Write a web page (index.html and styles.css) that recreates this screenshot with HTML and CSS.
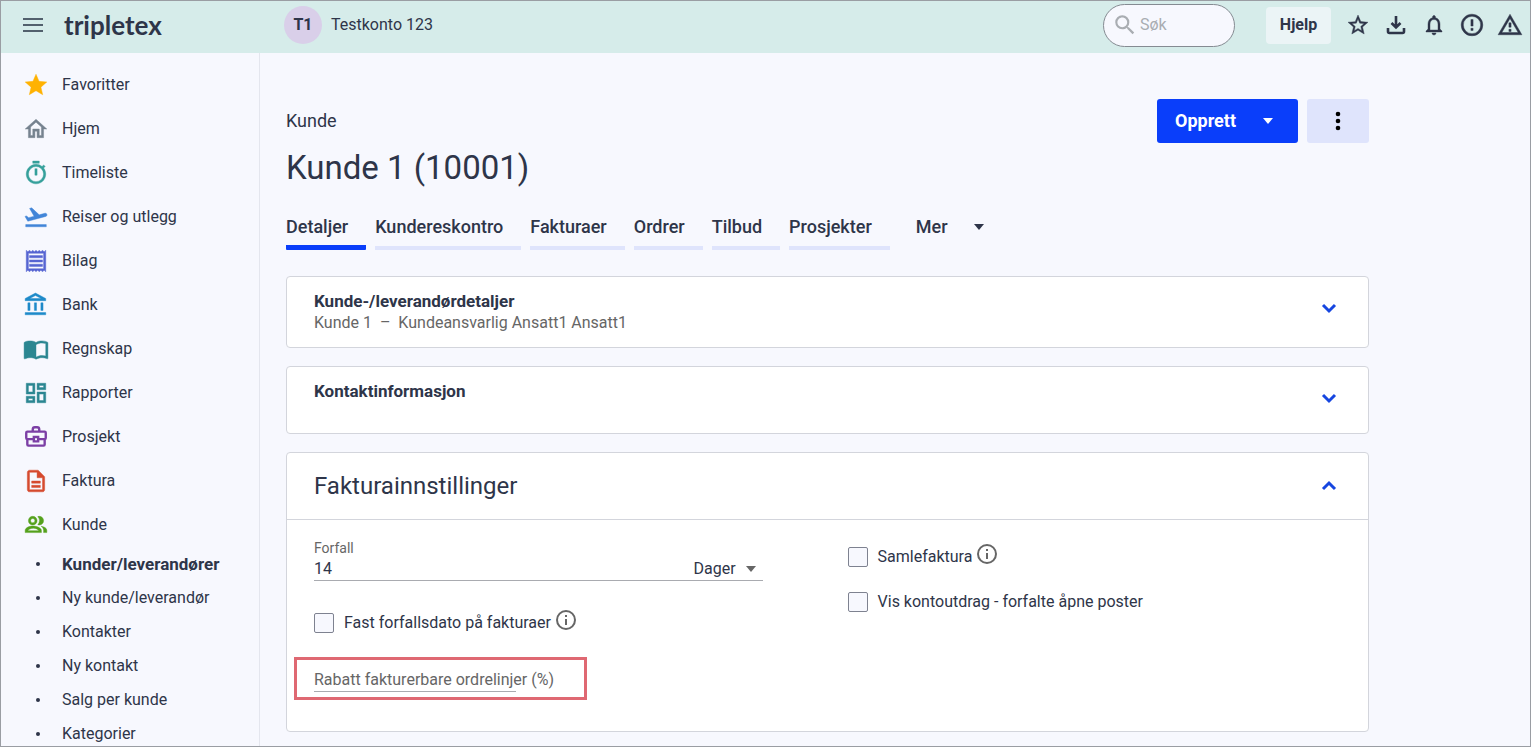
FILE: index.html
```html
<!DOCTYPE html>
<html lang="no">
<head>
	<title>Kunde 1 (10001) - Tripletex</title>
	<meta name="viewport" content="width=device-width, initial-scale=1.0">
	<meta charset="utf-8">

	<link rel="stylesheet" href="styles.css">
</head>
<body>

	<header class="topbar">
		<div class="topbar-brand">
			<button type="button" class="menu-button" aria-label="Meny">
				<svg width="22" height="16" viewBox="0 0 22 16"><path d="M1 2h20M1 8h20M1 14h20" stroke="currentColor" stroke-width="2"/></svg>
			</button>
			<a href="#" class="logo">tripletex</a>
		</div>

		<button type="button" class="account">
			<span class="avatar">T1</span>
			<span>Testkonto 123</span>
		</button>

		<label class="search">
			<svg width="26" height="26" viewBox="0 0 24 24" fill="currentColor"><path d="M15.5 14h-.79l-.28-.27A6.47 6.47 0 0 0 16 9.5 6.5 6.5 0 1 0 9.500 16c1.610 0 3.090-.59 4.230-1.570l.27.28v.79l5 4.990L20.490 19zm-6 0C7.010 14 5 11.990 5 9.500S7.010 5 9.500 5 14 7.010 14 9.500 11.990 14 9.500 14"/></svg>
			<input type="search" placeholder="Søk" aria-label="Søk">
		</label>

		<button type="button" class="help-button">Hjelp</button>

		<div class="topbar-icons">
			<button type="button" aria-label="Favoritter">
				<svg width="24" height="24" viewBox="0 0 24 24" fill="currentColor"><path d="m22 9.240-7.190-.62L12 2 9.190 8.630 2 9.240l5.460 4.730L5.820 21 12 17.270 18.180 21l-1.630-7.030zM12 15.400l-3.760 2.270 1-4.280-3.320-2.880 4.380-.38L12 6.100l1.710 4.040 4.380.38-3.320 2.880 1 4.280z"/></svg>
			</button>
			<button type="button" aria-label="Last ned">
				<svg width="24" height="24" viewBox="0 0 24 24"><path d="M12 3v11M7.500 10l4.500 4.500 4.500-4.500M4 15v3.500q0 1.500 1.500 1.500h13q1.500 0 1.500-1.500V15" fill="none" stroke="currentColor" stroke-width="2.600"/></svg>
			</button>
			<button type="button" aria-label="Varsler">
				<svg width="24" height="24" viewBox="0 0 24 24" fill="currentColor"><path d="M12 22c1.100 0 2-.9 2-2h-4c0 1.100.9 2 2 2m6-6v-5c0-3.070-1.630-5.640-4.500-6.320V4c0-.83-.67-1.500-1.500-1.500s-1.500.67-1.500 1.500v.68C7.640 5.360 6 7.920 6 11v5l-2 2v1h16v-1zm-2 1H8v-6c0-2.480 1.510-4.500 4-4.500s4 2.020 4 4.500z"/></svg>
			</button>
			<button type="button" aria-label="Feil">
				<svg width="26" height="26" viewBox="0 0 24 24" fill="currentColor"><path d="M11 15h2v2h-2zm0-8h2v6h-2zm1-5C6.470 2 2 6.500 2 12a10 10 0 1 0 10-10m0 18a8 8 0 1 1 0-16 8 8 0 0 1 0 16"/></svg>
			</button>
			<button type="button" aria-label="Advarsler">
				<svg width="26" height="26" viewBox="0 0 24 24" fill="currentColor"><path d="M12 5.990 19.530 19H4.470zM12 2 1 21h22zm1 14h-2v2h2zm0-6h-2v4h2z"/></svg>
			</button>
		</div>
	</header>

	<div class="layout">
		<nav class="sidebar">
			<ul class="menu">
				<li><a href="#" class="menu-item">
					<svg class="star" viewBox="0 0 24 24"><path d="M12 17.270 18.180 21l-1.640-7.030L22 9.240l-7.190-.61L12 2 9.190 8.630 2 9.240l5.460 4.730L5.820 21z"/></svg>
					Favoritter
				</a></li>
				<li><a href="#" class="menu-item">
					<svg class="home" viewBox="0 0 24 24"><path d="m12 5.690 5 4.500V18h-2v-6H9v6H7v-7.810zM12 3 2 12h3v8h6v-6h2v6h6v-8h3z"/></svg>
					Hjem
				</a></li>
				<li><a href="#" class="menu-item">
					<svg class="timer" viewBox="0 0 24 24"><path d="M15 1H9v2h6zm-4 13h2V8h-2zm8.030-6.610 1.420-1.420c-.43-.51-.9-.99-1.410-1.410l-1.420 1.420A8.960 8.960 0 0 0 12 4a9 9 0 1 0 7.030 3.390M12 20a7 7 0 1 1 0-14 7 7 0 0 1 0 14"/></svg>
					Timeliste
				</a></li>
				<li><a href="#" class="menu-item">
					<svg class="travel" viewBox="0 0 24 24"><path d="M2.500 19h19v2h-19zm19.570-9.360c-.21-.8-1.040-1.280-1.840-1.060L14.920 10l-6.900-6.430-1.930.51 4.140 7.170-4.970 1.330-1.970-1.540-1.450.39 2.590 4.490 16.570-4.440c.81-.23 1.280-1.050 1.070-1.840"/></svg>
					Reiser og utlegg
				</a></li>
				<li><a href="#" class="menu-item">
					<svg class="voucher" viewBox="0 0 24 24"><path d="M19.500 3.500 18 2l-1.500 1.500L15 2l-1.500 1.500L12 2l-1.500 1.500L9 2 7.500 3.500 6 2 4.500 3.500 3 2v20l1.500-1.500L6 22l1.500-1.500L9 22l1.500-1.500L12 22l1.500-1.500L15 22l1.500-1.500L18 22l1.500-1.500L21 22V2zM19 19.090H5V4.910h14zM6 15h12v2H6zm0-4h12v2H6zm0-4h12v2H6z"/></svg>
					Bilag
				</a></li>
				<li><a href="#" class="menu-item">
					<svg class="bank" viewBox="0 0 24 24"><path d="M6.500 10h-2v7h2zm6 0h-2v7h2zm8.500 9H2v2h19zm-2.500-9h-2v7h2zm-7-6.740L16.710 6H6.290zm0-2.260L2 6v2h19V6z"/></svg>
					Bank
				</a></li>
				<li><a href="#" class="menu-item">
					<svg class="ledger" viewBox="0 0 24 24"><path d="M21 5c-1.110-.35-2.330-.5-3.500-.5-1.950 0-4.050.4-5.500 1.500-1.450-1.100-3.550-1.500-5.500-1.500S2.450 4.900 1 6v14.650c0 .25.250.5.5.5.1 0 .15-.05.25-.05C3.100 20.450 5.050 20 6.500 20c1.950 0 4.050.4 5.500 1.500 1.350-.85 3.800-1.500 5.500-1.500 1.650 0 3.350.3 4.750 1.050.1.050.15.050.25.050.25 0 .5-.25.5-.5V6c-.6-.45-1.250-.75-2-1m0 13.500c-1.100-.35-2.300-.5-3.500-.5-1.700 0-4.150.65-5.500 1.500V8c1.350-.85 3.800-1.500 5.500-1.500 1.200 0 2.400.15 3.500.5z"/></svg>
					Regnskap
				</a></li>
				<li><a href="#" class="menu-item">
					<svg class="reports" viewBox="0 0 24 24"><path d="M19 5v2h-4V5zM9 5v6H5V5zm10 8v6h-4v-6zM9 17v2H5v-2zM21 3h-8v6h8zM11 3H3v10h8zm10 8h-8v10h8zm-10 4H3v6h8z"/></svg>
					Rapporter
				</a></li>
				<li><a href="#" class="menu-item">
					<svg class="project" viewBox="0 0 24 24"><path d="M9 7V5q0-2 2-2h2q2 0 2 2v2M9 14H4q-1 0-1-1V8q0-1 1-1h16q1 0 1 1v5q0 1-1 1h-5M4 14v5q0 1 1 1h14q1 0 1-1v-5M10 12h4v4h-4z"/></svg>
					Prosjekt
				</a></li>
				<li><a href="#" class="menu-item">
					<svg class="invoice" viewBox="0 0 24 24"><path d="M8 16h8v2H8zm0-4h8v2H8zm6-10H6c-1.100 0-2 .9-2 2v16c0 1.100.89 2 1.990 2H18c1.100 0 2-.9 2-2V8zm4 18H6V4h7v5h5z"/></svg>
					Faktura
				</a></li>
				<li>
					<a href="#" class="menu-item">
						<svg class="customer" viewBox="0 0 24 24"><path d="M16.670 13.130C18.040 14.060 19 15.320 19 17v2h3v-2c0-2.180-2.570-3.470-5.330-3.870M15 12a4 4 0 1 0 0-8c-.47 0-.91.1-1.330.24a5.980 5.980 0 0 1 0 7.520c.42.14.86.24 1.330.24m-6 0a4 4 0 1 0 0-8 4 4 0 0 0 0 8m0-6a2 2 0 1 1 0 4 2 2 0 0 1 0-4m0 7c-2.670 0-7 1.340-7 4v2h15v-2c0-2.660-5.330-4-8-4m5 4.200H4.500C5.200 16 7 15 9.500 15s4.300 1 5 2.200z"/></svg>
						Kunde
					</a>
					<ul class="submenu">
						<li><a href="#" class="submenu-item current">Kunder/leverandører</a></li>
						<li><a href="#" class="submenu-item">Ny kunde/leverandør</a></li>
						<li><a href="#" class="submenu-item">Kontakter</a></li>
						<li><a href="#" class="submenu-item">Ny kontakt</a></li>
						<li><a href="#" class="submenu-item">Salg per kunde</a></li>
						<li><a href="#" class="submenu-item">Kategorier</a></li>
					</ul>
				</li>
			</ul>
		</nav>

		<main class="content">
			<div class="page-head">
				<div>
					<div class="breadcrumb">Kunde</div>
					<h1>Kunde 1 (10001)</h1>
				</div>
				<div class="page-actions">
					<button type="button" class="create-button">Opprett <span class="caret"></span></button>
					<button type="button" class="more-button" aria-label="Flere valg">
						<svg width="6" height="20" viewBox="0 0 6 20"><circle cx="3" cy="3" r="2.300"/><circle cx="3" cy="10" r="2.300"/><circle cx="3" cy="17" r="2.300"/></svg>
					</button>
				</div>
			</div>

			<nav class="tabs">
				<a href="#" class="tab active">Detaljer</a>
				<a href="#" class="tab">Kundereskontro</a>
				<a href="#" class="tab">Fakturaer</a>
				<a href="#" class="tab">Ordrer</a>
				<a href="#" class="tab">Tilbud</a>
				<a href="#" class="tab">Prosjekter</a>
				<button type="button" class="tab-more">Mer <span class="caret"></span></button>
			</nav>

			<section class="panel">
				<button type="button" class="panel-toggle">
					<span>
						<strong>Kunde-/leverandørdetaljer</strong>
						<span class="summary">Kunde 1&nbsp; –&nbsp; Kundeansvarlig Ansatt1 Ansatt1</span>
					</span>
					<svg class="chevron" viewBox="0 0 24 24"><path d="m6 9 6 6 6-6"/></svg>
				</button>
			</section>

			<section class="panel">
				<button type="button" class="panel-toggle">
					<strong>Kontaktinformasjon</strong>
					<svg class="chevron" viewBox="0 0 24 24"><path d="m6 9 6 6 6-6"/></svg>
				</button>
			</section>

			<section class="panel">
				<button type="button" class="panel-toggle open">
					<span class="panel-title">Fakturainnstillinger</span>
					<svg class="chevron" viewBox="0 0 24 24"><path d="m6 15 6-6 6 6"/></svg>
				</button>

				<div class="panel-body">
					<div class="column">
						<label for="due" class="field-label">Forfall</label>
						<div class="due-field">
							<input type="text" id="due" value="14">
							<select aria-label="Enhet">
								<option>Dager</option>
							</select>
							<span class="caret"></span>
						</div>

						<div class="check-row">
							<input type="checkbox" id="fixed-date">
							<label for="fixed-date">Fast forfallsdato på fakturaer</label>
							<svg class="info" viewBox="0 0 24 24"><path d="M11 7h2v2h-2zm0 4h2v6h-2zm1-9a10 10 0 1 0 0 20 10 10 0 0 0 0-20m0 18a8 8 0 1 1 0-16 8 8 0 0 1 0 16"/></svg>
						</div>

						<div class="discount-field">
							<label for="discount">Rabatt fakturerbare ordrelinjer (%)</label>
							<input type="text" id="discount">
							<span class="highlight"></span>
						</div>
					</div>

					<div class="column options">
						<div class="check-row">
							<input type="checkbox" id="collective">
							<label for="collective">Samlefaktura</label>
							<svg class="info" viewBox="0 0 24 24"><path d="M11 7h2v2h-2zm0 4h2v6h-2zm1-9a10 10 0 1 0 0 20 10 10 0 0 0 0-20m0 18a8 8 0 1 1 0-16 8 8 0 0 1 0 16"/></svg>
						</div>
						<div class="check-row">
							<input type="checkbox" id="statement">
							<label for="statement">Vis kontoutdrag - forfalte åpne poster</label>
						</div>
					</div>
				</div>
			</section>
		</main>
	</div>

</body>
</html>
```
FILE: styles.css
```css
* {
	box-sizing: border-box;
}

body {
	--text: #2e3549;
	--muted: #666;
	--blue: #0a3efa;
	--pale-blue: #dfe4fc;
	--background: #f7f8fe;
	display: flex;
	flex-direction: column;
	height: 100vh;
	margin: 0;
	overflow: hidden;
	border: 1px solid #9a9da3;
	background: var(--background);
	color: var(--text);
	font-family: Roboto, "Liberation Sans", sans-serif;
	font-size: 16px;
	line-height: 22px;
}

button, input, select {
	font: inherit;
	color: inherit;
}

button {
	padding: 0;
	border: none;
	background: none;
	cursor: pointer;
}

a {
	color: inherit;
	text-decoration: none;
}

svg {
	flex-shrink: 0;
}

.caret {
	border: 5px solid transparent;
	border-top: 6px solid currentColor;
	border-bottom: none;
}

/* Top bar */

.topbar {
	display: flex;
	align-items: center;
	flex-shrink: 0;
	height: 52px;
	padding-bottom: 4px;
	background: #d6ecea;
}

.topbar-brand {
	display: flex;
	align-items: center;
	gap: 20px;
	width: 283px;
	padding-left: 21px;
}

.menu-button {
	display: flex;
	color: #52606d;
}

.logo {
	font-family: Lato, sans-serif;
	font-size: 26px;
	font-weight: 700;
}

.account {
	display: flex;
	align-items: center;
	gap: 9px;
}

.avatar {
	width: 38px;
	border-radius: 50%;
	background: #d9cfe9;
	font-weight: 700;
	line-height: 38px;
}

.search {
	display: flex;
	align-items: center;
	width: 132px;
	height: 43px;
	margin-left: auto;
	padding: 0 8px;
	border: 1px solid #858b92;
	border-radius: 22px;
	background: var(--background);
	color: #a9adb2;
}

.search input {
	width: 100%;
	min-width: 0;
	padding: 0 0 0 2px;
	border: none;
	outline: none;
	background: none;
}

.search input::placeholder {
	color: #a9adb2;
}

.help-button {
	width: 65px;
	height: 37px;
	margin: 0 8px 0 31px;
	border-radius: 4px;
	background: #ebf4f6;
	font-weight: 700;
}

.topbar-icons {
	display: flex;
	padding-right: 1px;
}

.topbar-icons button {
	display: flex;
	justify-content: center;
	align-items: center;
	width: 38px;
	height: 38px;
}

.topbar-icons svg, .menu-item svg {
	stroke: currentColor;
	stroke-width: .4;
}

/* Sidebar */

.layout {
	display: flex;
	flex: 1;
	min-height: 0;
}

.sidebar {
	flex-shrink: 0;
	width: 259px;
	padding-top: 10px;
	overflow: hidden;
	border-right: 1px solid #e4e6ee;
}

.menu, .submenu {
	margin: 0;
	padding: 0;
	list-style: none;
}

.menu-item {
	display: flex;
	align-items: center;
	gap: 13px;
	height: 44px;
	padding-left: 22px;
}

.menu-item svg {
	width: 26px;
	height: 26px;
	fill: currentColor;
}

.star { color: #ffb202; }
.home { color: #76828f; }
.timer { color: #35a09b; }
.travel { color: #4285d8; }
.voucher { color: #5664d2; }
.bank { color: #1e8ac9; }
.ledger, .reports { color: #2b8691; }
.project { color: #7c3fa5; }
.invoice { color: #d64a2e; }
.customer { color: #55a11c; }

.menu-item .project {
	fill: none;
	stroke-width: 2.2;
}

.submenu-item {
	display: flex;
	align-items: center;
	height: 34px;
	padding-left: 35px;
}

.submenu-item::before {
	content: '';
	width: 4px;
	height: 4px;
	margin-right: 22px;
	border-radius: 50%;
	background: var(--text);
}

.submenu-item.current {
	font-size: 17px;
	font-weight: 700;
}

/* Page */

.content {
	flex: 1;
	min-width: 0;
	padding: 46px 161px 0 26px;
	overflow: hidden;
}

.page-head {
	display: flex;
	justify-content: space-between;
}

.breadcrumb {
	padding-top: 11px;
	font-size: 18px;
}

h1 {
	margin: 16px 0 0;
	font-size: 33px;
	font-weight: 400;
	line-height: 40px;
}

.page-actions {
	display: flex;
	gap: 9px;
	height: 44px;
}

.create-button {
	display: flex;
	justify-content: space-between;
	align-items: center;
	width: 141px;
	padding: 0 25px 0 18px;
	border-radius: 3px;
	background: var(--blue);
	color: #fff;
	font-size: 18px;
	font-weight: 700;
}

.more-button {
	width: 62px;
	border-radius: 3px;
	background: var(--pale-blue);
}

.more-button svg {
	display: block;
	margin: auto;
}

.tabs {
	display: flex;
	gap: 9px;
	margin: 28px 0 26px;
	font-size: 18px;
	font-weight: 500;
}

.tab {
	height: 34px;
	padding-right: 18px;
	border-bottom: 4px solid var(--pale-blue);
}

.tab.active {
	border-bottom: 5px solid var(--blue);
	border-radius: 1px;
}

.tab-more {
	display: flex;
	align-items: center;
	gap: 26px;
	height: 22px;
	margin-left: 17px;
}

/* Panels */

.panel {
	margin-bottom: 18px;
	border: 1px solid #d3d5dc;
	border-radius: 4px;
	background: #fff;
}

.panel-toggle {
	display: flex;
	justify-content: space-between;
	align-items: flex-start;
	width: 100%;
	min-height: 66px;
	padding: 13px 27px;
	text-align: left;
}

.panel-toggle strong {
	display: block;
	font-size: 17px;
	font-weight: 700;
}

.summary {
	color: var(--muted);
}

.chevron {
	width: 24px;
	height: 24px;
	margin-top: 6px;
	fill: none;
	stroke: #1646e0;
	stroke-width: 3;
}

.panel-toggle.open {
	align-items: center;
	min-height: 67px;
	padding: 0 27px;
	border-bottom: 1px solid #d3d5dc;
}

.panel-toggle.open .chevron {
	margin: 0;
}

.panel-title {
	font-size: 24px;
	line-height: 28px;
}

.panel-body {
	display: grid;
	grid-template-columns: 1fr 1.1fr;
	gap: 85px;
	padding: 20px 27px 39px;
}

.column {
	display: flex;
	flex-direction: column;
	min-width: 0;
}

.options {
	gap: 21px;
	padding-top: 5px;
}

.field-label {
	color: var(--muted);
	font-size: 14px;
	line-height: 16px;
}

.due-field {
	display: flex;
	align-items: center;
	height: 25px;
	margin-bottom: 30px;
	padding: 2px 7px 0 0;
	border-bottom: 1px solid #a9abb0;
}

.due-field input {
	flex: 1;
	min-width: 0;
	padding: 0;
	border: none;
	outline: none;
	background: none;
}

.due-field select {
	margin-right: 9px;
	padding: 0;
	border: none;
	outline: none;
	background: none;
	-webkit-appearance: none;
	appearance: none;
}

.due-field .caret {
	color: var(--muted);
}

.check-row {
	display: flex;
	align-items: center;
	height: 24px;
}

.check-row input {
	width: 20px;
	height: 20px;
	margin: 0 10px 0 0;
	border: 1px solid #7e8290;
	border-radius: 2px;
	background: var(--background);
	-webkit-appearance: none;
	appearance: none;
}

.info {
	width: 24px;
	height: 24px;
	margin: 0 0 6px 3px;
	fill: var(--muted);
}

.discount-field {
	position: relative;
	display: grid;
	width: 202px;
	height: 24px;
	margin-top: 33px;
	border-bottom: 1px solid #a9abb0;
}

/* The label lies in the empty input, like a placeholder */
.discount-field label, .discount-field input {
	grid-area: 1 / 1;
}

.discount-field label {
	color: var(--muted);
	line-height: 24px;
	white-space: nowrap;
}

.discount-field input {
	width: 100%;
	padding: 0;
	border: none;
	outline: none;
	background: none;
}

.highlight {
	position: absolute;
	top: -11px;
	left: -20px;
	width: 293px;
	height: 43px;
	border: 3px solid #df6872;
	pointer-events: none;
}
```
